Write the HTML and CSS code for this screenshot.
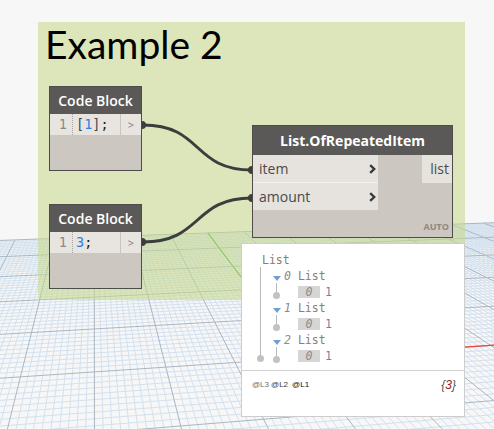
FILE: index.html
```html
<!DOCTYPE html>
<html lang="en">
<head>
<meta charset="utf-8">
<title>Example 2</title>
<link rel="stylesheet" href="styles.css">
</head>
<body>
<div class="canvas">
  <svg class="grid" id="grid" width="494" height="429" viewBox="0 0 494 429"></svg>

  <div class="group">
    <div class="group-title">Example 2</div>
  </div>

  <svg class="wires" width="494" height="429" viewBox="0 0 494 429">
    <path class="wire" d="M143,125 C203,125 192,170 252,170"/>
    <path class="wire" d="M143,242 C203,242 192,198 252,198"/>
    <circle class="knob" cx="142" cy="125" r="4"/>
    <circle class="knob" cx="142" cy="242" r="4"/>
    <circle class="knob" cx="252" cy="170" r="4"/>
    <circle class="knob" cx="252" cy="198" r="4"/>
  </svg>

  <div class="node code-block cb1">
    <div class="node-header">Code Block</div>
    <div class="code-row">
      <div class="gutter">1</div>
      <div class="code"><span class="br">[</span><span class="num">1</span><span class="br">]</span>;</div>
      <div class="code-port">&gt;</div>
    </div>
  </div>

  <div class="node code-block cb2">
    <div class="node-header">Code Block</div>
    <div class="code-row">
      <div class="gutter">1</div>
      <div class="code"><span class="num">3</span>;</div>
      <div class="code-port">&gt;</div>
    </div>
  </div>

  <div class="node list-node">
    <div class="node-header">List.OfRepeatedItem</div>
    <div class="ports">
      <div class="inputs">
        <div class="in-port"><span>item</span><svg class="chev" width="7" height="10" viewBox="0 0 7 10"><polyline points="1.2,1.2 5.2,5 1.2,8.8"/></svg></div>
        <div class="in-port"><span>amount</span><svg class="chev" width="7" height="10" viewBox="0 0 7 10"><polyline points="1.2,1.2 5.2,5 1.2,8.8"/></svg></div>
      </div>
      <div class="out-port">list</div>
    </div>
    <div class="auto">AUTO</div>
  </div>

  <div class="preview">
    <div class="preview-body">
      <div class="t-root">List</div>
      <div class="t-children">
        <div class="t-group">
          <div class="t-head"><span class="tri"></span><span class="idx">0</span><span class="lbl">List</span></div>
          <div class="t-items"><div class="t-item"><span class="box">0</span><span class="val">1</span></div></div>
        </div>
        <div class="t-group">
          <div class="t-head"><span class="tri"></span><span class="idx">1</span><span class="lbl">List</span></div>
          <div class="t-items"><div class="t-item"><span class="box">0</span><span class="val">1</span></div></div>
        </div>
        <div class="t-group">
          <div class="t-head"><span class="tri"></span><span class="idx">2</span><span class="lbl">List</span></div>
          <div class="t-items"><div class="t-item"><span class="box">0</span><span class="val">1</span></div></div>
        </div>
      </div>
    </div>
    <div class="preview-foot">
      <div class="levels"><span class="l3">@L3</span><span class="l2">@L2</span><span class="l1">@L1</span></div>
      <div class="count">{<span class="cnum">3</span>}</div>
    </div>
  </div>
</div>
<script src="script.js"></script>
</body>
</html>
```

FILE: styles.css
```css
* { box-sizing: border-box; }

body {
  margin: 0;
  background: #f7f7f7;
  font-family: "Open Sans", "Noto Sans", sans-serif;
}

.canvas {
  position: relative;
  width: 494px;
  height: 429px;
  overflow: hidden;
  background: #f7f7f7;
}

.grid,
.wires {
  position: absolute;
  left: 0;
  top: 0;
}

.grid line { stroke-width: 1; }
.grid .minor { stroke: #d3e1ee; }
.grid .major { stroke: #aab6c2; }
.grid .axis-x { stroke: #e8403c; stroke-width: 1.2; }
.grid .axis-y { stroke: #58bb37; stroke-width: 1.2; }

.group {
  position: absolute;
  left: 38px;
  top: 22px;
  width: 427px;
  height: 278px;
  background: rgba(198, 216, 136, 0.55);
}

.group-title {
  font-family: Lato, "Open Sans", sans-serif;
  font-size: 39px;
  line-height: 41px;
  padding: 2px 0 0 7px;
  color: #000;
}

.wire {
  fill: none;
  stroke: #3d3d3d;
  stroke-width: 3;
}

.knob { fill: #3d3d3d; }

.node {
  position: absolute;
  display: flex;
  flex-direction: column;
  border: 1px solid #4d4c4b;
  background: #ccc7c0;
}

.node-header {
  background: #5b5957;
  color: #fff;
  font-size: 14px;
  font-weight: 600;
  display: flex;
  align-items: center;
  justify-content: center;
  white-space: nowrap;
}

/* Code blocks */
.code-block {
  width: 93px;
  height: 85px;
}

.cb1 { left: 49px; top: 86px; }
.cb2 { left: 49px; top: 204px; }

.code-block .node-header { height: 27px; }

.code-row {
  height: 21px;
  display: flex;
  background: #e8e5e1;
  font-family: "DejaVu Sans Mono", "Liberation Mono", monospace;
  font-size: 13.5px;
  line-height: 21px;
}

.gutter {
  width: 23px;
  border-right: 1px dotted #a5a5a5;
  color: #8a8a8a;
  text-align: right;
  padding-right: 5px;
}

.code {
  padding-left: 3px;
  color: #222;
}

.code .br { color: #3b4a5a; }
.code .num { color: #2c7fe6; }

.code-port {
  margin-left: auto;
  width: 21px;
  border-left: 1px solid #c9c4be;
  color: #7a7a7a;
  font-family: "Open Sans", sans-serif;
  font-size: 11px;
  text-align: center;
}

/* List.OfRepeatedItem */
.list-node {
  left: 252px;
  top: 125px;
  width: 201px;
  height: 113px;
}

.list-node .node-header {
  height: 29px;
  font-weight: 700;
}

.ports {
  display: flex;
  justify-content: space-between;
  align-items: flex-start;
}

.inputs {
  width: 125px;
  display: flex;
  flex-direction: column;
}

.in-port {
  height: 27px;
  background: #e6e3de;
  display: flex;
  align-items: center;
  justify-content: space-between;
  padding: 0 2px 0 6px;
  font-size: 14px;
  color: #4a4a4a;
}

.in-port + .in-port {
  height: 28px;
  border-top: 1px solid #f2f0ec;
}

.chev polyline {
  fill: none;
  stroke: #3a3a3a;
  stroke-width: 2.4;
}

.out-port {
  width: 30px;
  height: 28px;
  background: #e6e3de;
  font-size: 14px;
  color: #4a4a4a;
  line-height: 28px;
  text-align: right;
  padding-right: 3px;
}

.auto {
  margin-top: auto;
  align-self: flex-end;
  font-size: 9px;
  font-weight: 700;
  color: #8d8984;
  padding: 0 3px 5px 0;
  line-height: 10px;
}

/* Preview bubble */
.preview {
  position: absolute;
  left: 241px;
  top: 243px;
  width: 224px;
  height: 174px;
  background: #fff;
  border: 1px solid #cdcdcd;
  display: flex;
  flex-direction: column;
}

.preview-body {
  height: 126px;
  padding: 8px 0 0 18px;
  font-family: "DejaVu Sans Mono", "Liberation Mono", monospace;
  font-size: 11.5px;
  line-height: 16px;
  color: #8c7d6d;
}

.t-root { padding-left: 2px; }

.t-children {
  position: relative;
  padding-left: 13px;
}

.t-children::before {
  content: "";
  position: absolute;
  left: 0;
  top: -1px;
  bottom: 5px;
  width: 1px;
  background: #b9b9b9;
}

.t-children::after {
  content: "";
  position: absolute;
  left: -3px;
  bottom: 2px;
  width: 7px;
  height: 7px;
  border-radius: 50%;
  background: #c2c2c2;
}

.t-head {
  display: flex;
  align-items: center;
  height: 16px;
}

.tri {
  width: 0;
  height: 0;
  border-left: 4px solid transparent;
  border-right: 4px solid transparent;
  border-top: 5px solid #6f9fd3;
  margin: 4px 3px 0 0;
}

.idx {
  font-style: italic;
  color: #8a8a8a;
}

.lbl { margin-left: 7px; }

.t-items {
  position: relative;
  padding-left: 25px;
}

.t-items::before {
  content: "";
  position: absolute;
  left: 3px;
  top: -1px;
  bottom: 4px;
  width: 1px;
  background: #b9b9b9;
}

.t-items::after {
  content: "";
  position: absolute;
  left: 0;
  bottom: 1px;
  width: 7px;
  height: 7px;
  border-radius: 50%;
  background: #c2c2c2;
}

.t-item {
  display: flex;
  align-items: center;
  height: 16px;
}

.box {
  width: 22px;
  height: 12px;
  line-height: 12px;
  background: #d5d5d5;
  color: #8d8d8d;
  font-style: italic;
  text-align: center;
}

.val {
  margin-left: 5px;
  color: #7d8290;
}

.preview-foot {
  flex: 1;
  border-top: 1px solid #d2d2d2;
  display: flex;
  justify-content: space-between;
  align-items: flex-start;
  padding: 8px 8px 0 10px;
  font-family: "Liberation Sans", Arial, sans-serif;
}

.levels {
  display: flex;
  gap: 2px;
  font-size: 8px;
  line-height: 12px;
  color: #333;
}

.levels .l3 { color: #6e6e6e; }
.levels .l2 { color: #3a3a3a; margin-right: 2px; }
.levels .l1 { color: #111; }

.count {
  font-size: 12px;
  line-height: 12px;
  font-style: italic;
  color: #555;
}

.count .cnum { color: #9a1b1b; }
```

FILE: script.js
```js
(function () {
  var svg = document.getElementById('grid');
  var NS = 'http://www.w3.org/2000/svg';
  var O = { x: 302, y: 358 };
  var V1 = { x: 94, y: 82 };
  var V2 = { x: 4420, y: 82 };
  var a = 0.0016, b = 0.01656;
  var XMIN = -100, XMAX = 100, YMIN = -25, YMAX = 50;

  function P(X, Y) {
    var w = a * X + b * Y + 1;
    return [(a * V2.x * X + b * V1.x * Y + O.x) / w,
            (a * V2.y * X + b * V1.y * Y + O.y) / w];
  }

  function line(p, q, cls) {
    var l = document.createElementNS(NS, 'line');
    l.setAttribute('x1', p[0].toFixed(2));
    l.setAttribute('y1', p[1].toFixed(2));
    l.setAttribute('x2', q[0].toFixed(2));
    l.setAttribute('y2', q[1].toFixed(2));
    l.setAttribute('class', cls);
    svg.appendChild(l);
  }

  [false, true].forEach(function (major) {
    var cls = major ? 'major' : 'minor';
    for (var X = XMIN; X <= XMAX; X++) {
      if ((X % 10 === 0) === major) line(P(X, YMIN), P(X, YMAX), cls);
    }
    for (var Y = YMIN; Y <= YMAX; Y++) {
      if ((Y % 10 === 0) === major) line(P(XMIN, Y), P(XMAX, Y), cls);
    }
  });

  line(P(0, 0), P(XMAX, 0), 'axis-x');
  line(P(0, 0), P(0, YMAX), 'axis-y');
})();
```
